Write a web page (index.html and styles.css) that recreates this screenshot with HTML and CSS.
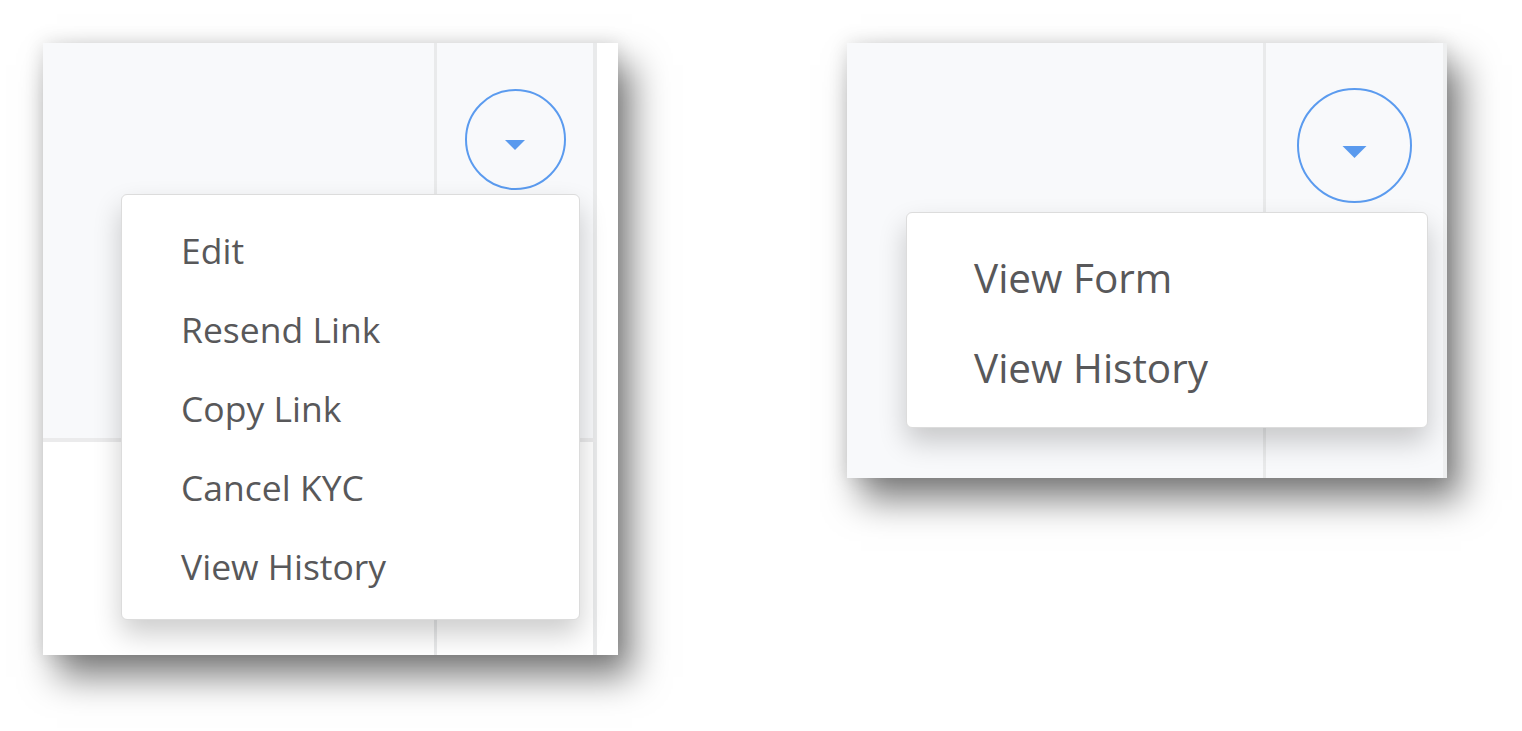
FILE: index.html
```html
<!DOCTYPE html>
<html lang="en">

<head>
    <meta charset="UTF-8">
    <meta name="viewport" content="width=device-width, initial-scale=1.0">
    <title>Row actions</title>
    <link rel="stylesheet" href="styles.css">
</head>

<body>

    <div class="page">
        <!-- first snippet: pending KYC row -->
        <div class="shot shot-left">
            <div class="grid">
                <div class="cell cell-main top"></div>
                <div class="cell cell-action top">
                    <button class="toggle" type="button">
                        <svg viewBox="0 0 20 10" class="caret"><polygon points="0,0 20,0 10,10" /></svg>
                    </button>
                </div>
                <div class="cell cell-edge"></div>
                <div class="cell cell-main bottom"></div>
                <div class="cell cell-action bottom"></div>
                <div class="cell cell-edge"></div>
            </div>
            <ul class="menu">
                <li><a href="#">Edit</a></li>
                <li><a href="#">Resend Link</a></li>
                <li><a href="#">Copy Link</a></li>
                <li><a href="#">Cancel KYC</a></li>
                <li><a href="#">View History</a></li>
            </ul>
        </div>

        <!-- second snippet: completed row -->
        <div class="shot shot-right">
            <div class="grid">
                <div class="cell cell-main"></div>
                <div class="cell cell-action">
                    <button class="toggle" type="button">
                        <svg viewBox="0 0 20 10" class="caret"><polygon points="0,0 20,0 10,10" /></svg>
                    </button>
                </div>
            </div>
            <ul class="menu">
                <li><a href="#">View Form</a></li>
                <li><a href="#">View History</a></li>
            </ul>
        </div>
    </div>

</body>

</html>
```

FILE: styles.css
```css
html,
body {
    height: 100%;
}

body {
    margin: 0;
    background-color: #fff;
    font-family: "Open Sans", "Noto Sans", sans-serif;
}

.page {
    display: flex;
    align-items: flex-start;
    min-height: 100%;
    box-sizing: border-box;
    padding: 43px 0 60px 43px;
}

.shot {
    position: relative;
    flex-shrink: 0;
    background-color: #fff;
    box-shadow: 14px 22px 34px rgba(0, 0, 0, 0.5), 0 0 18px rgba(0, 0, 0, 0.12);
}

.grid {
    display: grid;
    height: 100%;
}

.cell {
    box-sizing: border-box;
}

/* left snippet */
.shot-left {
    width: 575px;
    height: 612px;
}

.shot-left .grid {
    grid-template-columns: 394px 160px 21px;
    grid-template-rows: 399px 213px;
}

.shot-left .cell-main,
.shot-left .cell-action {
    border-right: 3px solid #e9eaeb;
}

.shot-left .cell-action {
    border-right-width: 4px;
}

.shot-left .top {
    background-color: #f8f9fb;
    border-bottom: 4px solid #ebebec;
}

.shot-left .cell-action.top {
    padding-top: 46px;
}

.shot-left .toggle {
    width: 101px;
    height: 101px;
}

.shot-left .caret {
    width: 20px;
    height: 10px;
    margin-top: 11px;
}

/* right snippet */
.shot-right {
    margin-left: 229px;
    width: 600px;
    height: 435px;
}

.shot-right .grid {
    grid-template-columns: 419px 181px;
    background-color: #f8f9fb;
}

.shot-right .cell-main {
    border-right: 3px solid #e9eaeb;
}

.shot-right .cell-action {
    border-right: 4px solid #eeeff0;
    padding-top: 45px;
}

.shot-right .toggle {
    width: 115px;
    height: 115px;
}

.shot-right .caret {
    width: 25px;
    height: 12px;
    margin-top: 12px;
}

/* round dropdown toggle */
.toggle {
    display: flex;
    align-items: center;
    justify-content: center;
    margin: 0 auto;
    padding: 0;
    background: none;
    border: 2px solid #5b9bef;
    border-radius: 50%;
    cursor: pointer;
}

.caret {
    display: block;
    fill: #5a9aee;
}

/* opened menu */
.menu {
    position: absolute;
    list-style-type: none;
    margin: 0;
    background-color: #fff;
    border: 1px solid #dcdcdc;
    border-radius: 6px;
    box-shadow: 0 14px 28px rgba(0, 0, 0, 0.2);
    box-sizing: border-box;
}

.menu a {
    display: block;
    color: #58585a;
    text-decoration: none;
    white-space: nowrap;
}

.shot-left .menu {
    left: 78px;
    top: 151px;
    width: 459px;
    height: 426px;
    padding: 16px 0 15px 59px;
}

.shot-left .menu a {
    font-size: 35.5px;
    line-height: 79px;
}

.shot-right .menu {
    left: 59px;
    top: 169px;
    width: 522px;
    height: 216px;
    padding: 20px 0 16px 67px;
}

.shot-right .menu a {
    font-size: 40.5px;
    line-height: 90px;
}
```
